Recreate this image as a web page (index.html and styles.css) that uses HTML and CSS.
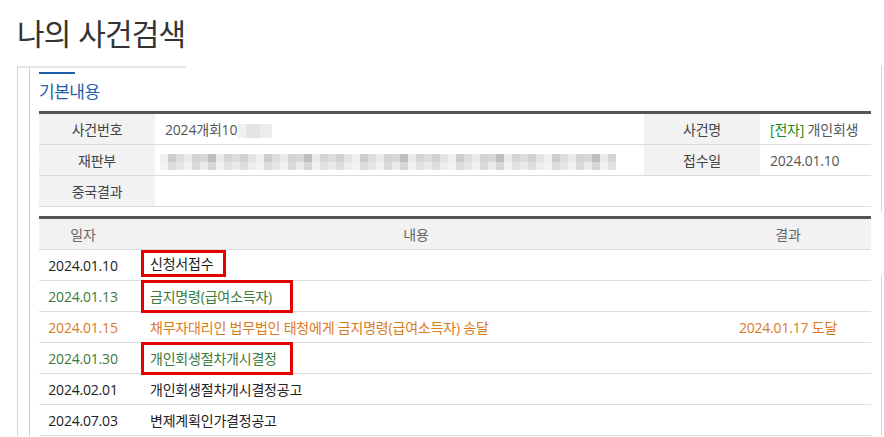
FILE: index.html
```html
<!DOCTYPE html>
<html lang="ko">
<head>
    <meta charset="UTF-8">
    <title>나의 사건검색</title>
    <link rel="stylesheet" href="styles.css">
</head>
<body>
    <!-- 페이지 제목 -->
    <h1 class="page-title">나의 사건검색</h1>

    <div class="panel">
        <div class="panel-cap"></div>
        <div class="panel-inner">
            <!-- 기본내용 -->
            <div class="section-bar"></div>
            <h2 class="section-title">기본내용</h2>

            <table class="info-table">
                <colgroup>
                    <col class="col-label">
                    <col>
                    <col class="col-label">
                    <col class="col-value2">
                </colgroup>
                <tr>
                    <th>사건번호</th>
                    <td>2024개회10<span class="redact redact-short"></span></td>
                    <th>사건명</th>
                    <td><span class="tag-green">[전자]</span> 개인회생</td>
                </tr>
                <tr>
                    <th>재판부</th>
                    <td><div class="redact redact-long"></div></td>
                    <th>접수일</th>
                    <td>2024.01.10</td>
                </tr>
                <tr>
                    <th>중국결과</th>
                    <td colspan="3"></td>
                </tr>
            </table>

            <!-- 진행내용 -->
            <table class="history-table">
                <colgroup>
                    <col class="col-date">
                    <col>
                    <col class="col-result">
                </colgroup>
                <tr>
                    <th>일자</th>
                    <th>내용</th>
                    <th>결과</th>
                </tr>
                <tr>
                    <td class="date">2024.01.10</td>
                    <td class="content"><span class="mark mark-sm">신청서접수</span></td>
                    <td class="result"></td>
                </tr>
                <tr class="green">
                    <td class="date">2024.01.13</td>
                    <td class="content"><span class="mark mark-lg">금지명령(급여소득자)</span></td>
                    <td class="result"></td>
                </tr>
                <tr class="orange">
                    <td class="date">2024.01.15</td>
                    <td class="content">채무자대리인 법무법인 태청에게 금지명령(급여소득자) 송달</td>
                    <td class="result">2024.01.17 도달</td>
                </tr>
                <tr class="green">
                    <td class="date">2024.01.30</td>
                    <td class="content"><span class="mark mark-lg">개인회생절차개시결정</span></td>
                    <td class="result"></td>
                </tr>
                <tr>
                    <td class="date">2024.02.01</td>
                    <td class="content">개인회생절차개시결정공고</td>
                    <td class="result"></td>
                </tr>
                <tr>
                    <td class="date">2024.07.03</td>
                    <td class="content">변제계획인가결정공고</td>
                    <td class="result"></td>
                </tr>
            </table>
        </div>
    </div>
</body>
</html>
```

FILE: styles.css
```css
/* 전체 레이아웃 */
body {
    margin: 0;
    font-family: 'Open Sans', 'Noto Sans CJK KR', sans-serif;
    font-size: 14px;
    letter-spacing: -0.2px;
    color: #333;
    background: #fff;
    overflow: hidden;
}

/* 페이지 제목 */
.page-title {
    margin: 14px 0 0 17px;
    height: 52px;
    font-family: 'Noto Sans CJK KR', sans-serif;
    font-size: 30px;
    font-weight: normal;
    line-height: 36px;
    letter-spacing: -0.8px;
    color: #333;
}

/* 패널 */
.panel {
    margin-left: 17px;
    width: 864px;
    border-left: 1px solid #d6d6d6;
    background:
        linear-gradient(#d6d6d6, #d6d6d6) right top / 1px 146px no-repeat,
        linear-gradient(#d6d6d6, #d6d6d6) right 209px / 1px 100% no-repeat;
}

.panel-cap {
    width: 168px;
    height: 2px;
    background: #e6e6e6;
}

.panel-inner {
    margin-left: 11px;
    border-left: 1px solid #cfcfcf;
    padding: 4px 10px 0 9px;
}

/* 기본내용 */
.section-bar {
    width: 36px;
    height: 2px;
    background: #1c5fa8;
}

.section-title {
    margin: 7px 0 10px;
    font-family: 'Noto Sans CJK KR', sans-serif;
    font-size: 17px;
    font-weight: normal;
    line-height: 20px;
    letter-spacing: -0.5px;
    color: #1c5fa8;
}

/* 테이블 공통 */
table {
    width: 832px;
    border-collapse: collapse;
    table-layout: fixed;
    border-top: 3px solid #555;
}

th, td {
    height: 30px;
    padding: 0;
    border-bottom: 1px solid #dcdcdc;
    font-weight: normal;
    white-space: nowrap;
}

/* 기본내용 테이블 */
.col-label { width: 116px; }
.col-value2 { width: 111px; }

.info-table th {
    background: #f2f2f2;
    color: #444;
    text-align: center;
}

.info-table td {
    padding-left: 10px;
    color: #555;
}

.tag-green {
    color: #1a8a1a;
}

/* 가려진 정보 */
.redact {
    display: inline-block;
    vertical-align: middle;
}

.redact-short {
    width: 34px;
    height: 14px;
    margin-left: 1px;
    background: linear-gradient(90deg, #f0f0f0 0 8px, #e4e4e4 8px 22px, #ececec 22px);
}

.redact-long {
    width: 456px;
    height: 16px;
    margin-left: -5px;
    background:
        repeating-linear-gradient(90deg, #efefef 0 8px, #cdcdcd 8px 16px, #dedede 16px 24px, #e9e9e9 24px 32px, #d3d3d3 32px 40px, #d8d8d8 40px 48px, #bdbdbd 48px 56px, #eaeaea 56px 64px, #d5d5d5 64px 72px, #dcdcdc 72px 80px, #d2d2d2 80px 88px, #e4e4e4 88px 96px) left top / 100% 8px no-repeat,
        repeating-linear-gradient(90deg, #f3f3f3 0 8px, #dcdcdc 8px 16px, #e6e6e6 16px 24px, #f0f0f0 24px 32px, #dadada 32px 40px, #ececec 40px 48px, #d6d6d6 48px 56px, #f2f2f2 56px 64px, #e2e2e2 64px 72px, #eaeaea 72px 80px, #dedede 80px 88px, #ededed 88px 96px) left bottom / 100% 8px no-repeat;
}

/* 진행내용 테이블 */
.history-table {
    margin-top: 9px;
}

.col-date { width: 88px; }
.col-result { width: 166px; }

.history-table th {
    background: #f2f2f2;
    color: #666;
    text-align: center;
}

.history-table .date {
    text-align: center;
    color: #222;
}

.history-table .content {
    padding-left: 23px;
    color: #222;
}

.history-table .result {
    text-align: center;
}

.history-table .green td {
    color: #3b7b3b;
}

.history-table .orange td {
    color: #dc7a1e;
}

/* 빨간 표시 박스 */
.mark {
    display: inline-block;
    box-sizing: border-box;
    margin-left: -9px;
    padding-left: 6px;
    border: 3px solid #e60000;
    vertical-align: middle;
}

.mark-sm {
    position: relative;
    top: -2px;
    width: 85px;
    line-height: 21px;
}

.mark-lg {
    margin-top: -3px;
    margin-bottom: -3px;
    width: 152px;
    line-height: 27px;
}
```
